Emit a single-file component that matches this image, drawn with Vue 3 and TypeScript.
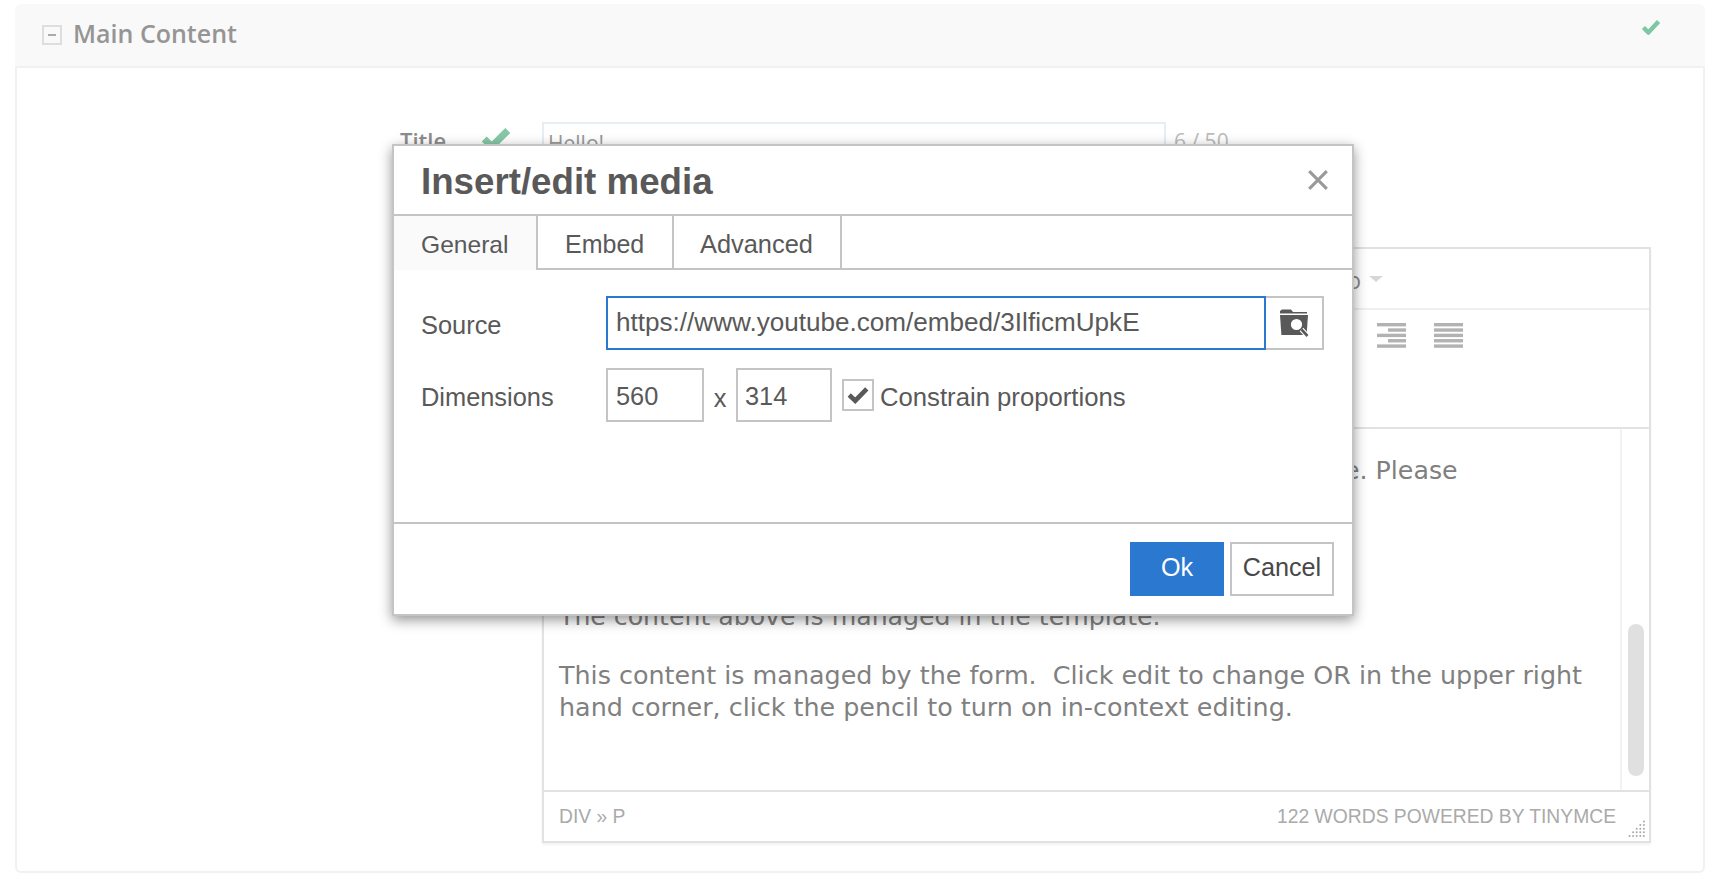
<script setup lang="ts">
import { computed } from 'vue'

const tabs: string[] = ['General', 'Embed', 'Advanced']

const gripDots = computed(() => {
  const dots: { x: number; y: number }[] = []
  for (let row = 0; row < 5; row++) {
    for (let col = 4 - row; col < 5; col++) {
      dots.push({ x: 1.5 + col * 3.6, y: 1.5 + row * 3.6 })
    }
  }
  return dots
})

const rightBars = [
  { x: 0, w: 29 },
  { x: 11, w: 18 },
  { x: 0, w: 29 },
  { x: 11, w: 18 },
  { x: 0, w: 29 }
]
const justifyBars = [0, 1, 2, 3, 4]
</script>

<template>
  <div class="page">
    <section class="card">
      <header class="card-head">
        <span class="toggle"><span class="toggle-dash"></span></span>
        <h2 class="card-title">Main Content</h2>
        <svg class="head-check" viewBox="0 0 18 14" width="20" height="16">
          <path d="M2.2 7.5 L6.6 12 L15.8 2" fill="none" stroke="#7fc7a3" stroke-width="4" stroke-linejoin="round" />
        </svg>
      </header>
      <div class="card-body">
        <div class="field-row">
          <span class="field-label">Title</span>
          <svg class="field-check" viewBox="0 0 28 22" width="30" height="24">
            <path d="M3 11 L10 18 L25 3" fill="none" stroke="#85c7a6" stroke-width="6.5" />
          </svg>
          <div class="field-input">Hello!</div>
          <span class="field-count">6 / 50</span>
        </div>

        <div class="editor">
          <div class="menubar"><span class="menu-item">Video</span><span class="menu-caret"></span></div>
          <div class="toolbar">
            <svg viewBox="0 0 29 26" width="29" height="26">
              <rect v-for="(b, i) in rightBars" :key="i" :x="b.x" :y="i * 5.35" :width="b.w" height="3.4" fill="#b2b2b2" />
            </svg>
            <svg viewBox="0 0 29 26" width="29" height="26">
              <rect v-for="i in justifyBars" :key="i" x="0" :y="i * 5.35" width="29" height="3.4" fill="#b2b2b2" />
            </svg>
          </div>
          <div class="edit-area">
            <div class="edit-text">
              <p class="para-top">This content is part of the template, and cannot be edited here. Please<br />contact your site administrator.</p>
              <p class="para-mid">The content above is managed in the template.</p>
              <p class="para-low">This content is managed by the form.&nbsp; Click edit to change OR in the upper right<br />hand corner, click the pencil to turn on in-context editing.</p>
            </div>
            <div class="scroll-track"><div class="scroll-thumb"></div></div>
          </div>
          <div class="statusbar">
            <span>DIV » P</span>
            <span class="status-right">122 WORDS POWERED BY TINYMCE</span>
            <svg class="grip" viewBox="0 0 17 17" width="17" height="17">
              <circle v-for="(d, i) in gripDots" :key="i" :cx="d.x" :cy="d.y" r="1" fill="#a8a8a8" />
            </svg>
          </div>
        </div>
      </div>
    </section>

    <div class="dialog">
      <div class="dlg-head">
        <h1 class="dlg-title">Insert/edit media</h1>
        <svg class="dlg-close" viewBox="0 0 20 20" width="22" height="22">
          <path d="M2 2 L18 18 M18 2 L2 18" stroke="#9a9a9a" stroke-width="2.8" fill="none" />
        </svg>
      </div>
      <div class="tabs">
        <div v-for="(t, i) in tabs" :key="t" class="tab" :class="['tab-' + i, { active: i === 0 }]">{{ t }}</div>
      </div>
      <div class="dlg-body">
        <div class="row">
          <span class="row-label">Source</span>
          <div class="source-input">https://www.youtube.com/embed/3IlficmUpkE</div>
          <div class="browse">
            <svg viewBox="0 0 30 28" width="30" height="28">
              <path d="M3 0.5 H12 L14 3 H28 V4.6 H1 V2 Z" fill="#595959" />
              <path d="M1 6 H29 L27.6 26 H2.4 Z" fill="#595959" />
              <circle cx="17.5" cy="15.5" r="6.6" fill="#fff" stroke="#595959" stroke-width="2" />
              <path d="M22.5 20.5 L28.5 27" stroke="#fff" stroke-width="5" />
              <path d="M22.5 20.5 L28.5 27" stroke="#595959" stroke-width="2.6" />
            </svg>
          </div>
        </div>
        <div class="row row-dim">
          <span class="row-label">Dimensions</span>
          <div class="dim dim-w">560</div>
          <span class="times">x</span>
          <div class="dim dim-h">314</div>
          <span class="checkbox">
            <svg viewBox="0 0 20 16" width="22" height="18">
              <path d="M2 8 L7.5 13.2 L18 2.4" fill="none" stroke="#595959" stroke-width="4.2" />
            </svg>
          </span>
          <span class="check-label">Constrain proportions</span>
        </div>
      </div>
      <div class="dlg-foot">
        <button class="btn btn-ok" type="button">Ok</button>
        <button class="btn btn-cancel" type="button">Cancel</button>
      </div>
    </div>
  </div>
</template>

<style>
html, body { margin: 0; background: #fff; overflow: hidden; }
</style>

<style scoped>
* { box-sizing: border-box; }
.page {
  position: relative;
  height: 894px;
  padding: 4px 15px 0;
  overflow: hidden;
  background: #fff;
  font-family: "Liberation Sans", Arial, sans-serif;
}
.card {
  height: 869px;
  display: flex;
  flex-direction: column;
  border-radius: 6px;
}
.card-head {
  height: 64px;
  display: flex;
  align-items: center;
  padding: 0 44px 0 27px;
  background: #f9f9f9;
  border-bottom: 2px solid #f1f1f1;
  border-radius: 6px 6px 0 0;
}
.toggle {
  width: 20px;
  height: 20px;
  border: 2px solid #dedede;
  display: flex;
  align-items: center;
  justify-content: center;
  flex: none;
}
.toggle-dash { width: 8px; height: 2px; background: #aaa; }
.card-title {
  margin: -4px 0 0 11px;
  font: 600 25px "Open Sans", sans-serif;
  color: #959595;
  flex: 1;
}
.head-check { margin-top: -16px; flex: none; }
.card-body {
  flex: 1;
  border: 2px solid #f1f1f1;
  border-top: 0;
  border-radius: 0 0 6px 6px;
  padding: 54px 0 0 0;
}
.field-row {
  display: flex;
  align-items: flex-start;
  height: 125px;
  padding-left: 383px;
}
.field-label {
  font: 600 22px/37px "Open Sans", sans-serif;
  color: #8c8c8c;
  width: 81px;
  flex: none;
}
.field-check { margin-top: 5px; flex: none; }
.field-input {
  margin-left: 31px;
  width: 624px;
  height: 54px;
  border: 2px solid #e4eef3;
  padding-left: 4px;
  font: 400 21px/38px "Open Sans", sans-serif;
  color: #999;
  flex: none;
}
.field-count {
  margin-left: 8px;
  font: 400 21px/38px "Open Sans", sans-serif;
  color: #bbb;
}
.editor {
  margin-left: 525px;
  width: 1109px;
  height: 596px;
  border: 2px solid #e2e2e2;
  box-shadow: 0 2px 2px rgba(0, 0, 0, 0.05);
  display: flex;
  flex-direction: column;
  background: #fff;
}
.menubar {
  height: 61px;
  flex: none;
  display: flex;
  align-items: center;
  padding-left: 751px;
  border-bottom: 2px solid #f0f0f0;
}
.menu-item {
  font: 400 23px "Open Sans", sans-serif;
  color: #888;
  width: 66px;
  text-align: right;
  padding-top: 3px;
}
.menu-caret {
  margin: 0 0 0 8px;
  width: 0;
  height: 0;
  border-left: 7.5px solid transparent;
  border-right: 7.5px solid transparent;
  border-top: 6px solid #d4d8dd;
}
.toolbar {
  height: 119px;
  flex: none;
  display: flex;
  align-items: flex-start;
  gap: 28px;
  padding: 13px 0 0 833px;
  border-bottom: 2px solid #e2e2e2;
}
.edit-area {
  flex: 1;
  min-height: 0;
  display: flex;
  border-bottom: 2px solid #e2e2e2;
  overflow: hidden;
}
.edit-text {
  flex: 1;
  padding: 26px 0 0 15px;
  font: 400 25.4px/32px "DejaVu Sans", Verdana, sans-serif;
  color: #808080;
  white-space: nowrap;
}
.edit-text p { margin: 0; }
.para-top { font-size: 25.31px; }
.para-mid { font-size: 25.2px; }
.para-mid { margin-top: 82px !important; }
.para-low { margin-top: 26px !important; }
.scroll-track {
  width: 29px;
  flex: none;
  border-left: 2px solid #f2f2f2;
  padding: 195px 0 0 6px;
}
.scroll-thumb {
  width: 16px;
  height: 152px;
  background: #e0e0e0;
  border-radius: 8px;
}
.statusbar {
  height: 49px;
  flex: none;
  display: flex;
  align-items: center;
  padding: 0 4px 0 15px;
  position: relative;
  font-size: 19.3px;
  color: #aaa;
}
.status-right { margin-left: auto; margin-right: 29px; }
.grip { position: absolute; right: 4px; bottom: 4px; }

.dialog {
  position: absolute;
  left: 392px;
  top: 144px;
  width: 962px;
  height: 472px;
  background: #fff;
  border: 2px solid #c4c4c4;
  box-shadow: 0 4px 12px rgba(0, 0, 0, 0.42);
  display: flex;
  flex-direction: column;
  color: #595959;
}
.dlg-head {
  height: 70px;
  flex: none;
  display: flex;
  align-items: center;
  justify-content: space-between;
  padding: 0 23px 0 27px;
  border-bottom: 2px solid #c4c4c4;
}
.dlg-title {
  margin: 3px 0 0;
  font: 700 36.7px "Liberation Sans", Arial, sans-serif;
  color: #595959;
}
.dlg-close { margin-top: 0; }
.tabs {
  height: 54px;
  flex: none;
  display: flex;
  border-bottom: 2px solid #c4c4c4;
}
.tab {
  padding-left: 27px;
  font-size: 25px;
  line-height: 57px;
  color: #595959;
  border-right: 2px solid #c4c4c4;
}
.tab-0 { width: 144px; font-size: 24.6px; }
.tab-1 { width: 136px; }
.tab-2 { width: 168px; padding-left: 26px; font-size: 25.4px; }
.tab.active {
  background: #fafafa;
  margin-bottom: -2px;
  height: 54px;
}
.dlg-body {
  flex: 1;
  padding: 26px 0 0 27px;
  display: flex;
  flex-direction: column;
  gap: 18px;
}
.row {
  display: flex;
  align-items: center;
  height: 54px;
  font-size: 25.4px;
}
.row-label { width: 185px; flex: none; padding-top: 4px; }
.source-input {
  width: 660px;
  height: 54px;
  border: 2px solid #2b78d1;
  padding-left: 8px;
  line-height: 49px;
  color: #595959;
  font-size: 26.1px;
  white-space: nowrap;
}
.browse {
  width: 58px;
  height: 54px;
  border: 2px solid #c4c4c4;
  border-left: 0;
  display: flex;
  align-items: center;
  justify-content: center;
}
.dim {
  height: 54px;
  border: 2px solid #c4c4c4;
  padding-left: 8px;
  line-height: 52px;
}
.dim-w { width: 98px; }
.dim-h { width: 96px; padding-left: 7px; }
.times { width: 32px; text-align: center; padding-top: 6px; }
.checkbox {
  margin-left: 10px;
  width: 32px;
  height: 32px;
  border: 2px solid #c4c4c4;
  display: flex;
  align-items: center;
  justify-content: center;
  flex: none;
}
.check-label { margin-left: 6px; padding-top: 4px; font-size: 25.7px; }
.dlg-foot {
  height: 92px;
  flex: none;
  display: flex;
  justify-content: flex-end;
  gap: 6px;
  padding: 18px 18px 0 0;
  border-top: 2px solid #c4c4c4;
}
.btn {
  height: 54px;
  padding: 0 0 3px;
  font: 400 25.2px "Liberation Sans", Arial, sans-serif;
  border-radius: 0;
}
.btn-ok {
  width: 94px;
  background: #2b78d1;
  border: 0;
  color: #fff;
}
.btn-cancel {
  width: 104px;
  background: #fff;
  border: 2px solid #c4c4c4;
  color: #484848;
}
</style>
